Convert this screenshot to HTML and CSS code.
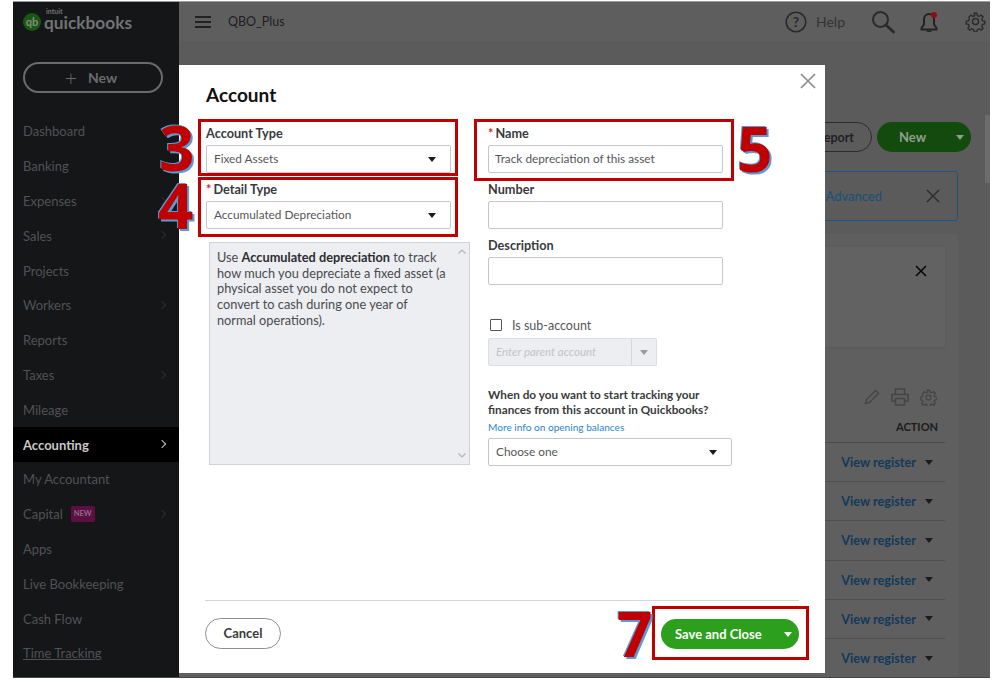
FILE: index.html
```html
<!DOCTYPE html>
<html lang="en">
<head>
<meta charset="utf-8">
<title>QuickBooks Account</title>
<link rel="stylesheet" href="styles.css">
</head>
<body>
<div class="frame">
  <aside class="sidebar">
    <div class="logo">
      <span class="logo-mark">qb</span>
      <div class="logo-text"><span class="logo-intuit">intuit</span><span class="logo-name">quickbooks</span></div>
    </div>
    <div class="new-btn"><span class="new-plus">+</span><span>New</span></div>
    <nav class="nav">
      <a class="nav-item">Dashboard</a>
      <a class="nav-item">Banking</a>
      <a class="nav-item">Expenses<i class="chev"></i></a>
      <a class="nav-item">Sales<i class="chev"></i></a>
      <a class="nav-item">Projects</a>
      <a class="nav-item">Workers<i class="chev"></i></a>
      <a class="nav-item">Reports</a>
      <a class="nav-item">Taxes<i class="chev"></i></a>
      <a class="nav-item">Mileage</a>
      <a class="nav-item active">Accounting<i class="chev"></i></a>
      <a class="nav-item">My Accountant</a>
      <a class="nav-item">Capital<span class="badge">NEW</span><i class="chev"></i></a>
      <a class="nav-item">Apps</a>
      <a class="nav-item">Live Bookkeeping</a>
      <a class="nav-item">Cash Flow</a>
      <a class="nav-item under">Time Tracking</a>
    </nav>
  </aside>
  <main class="main">
    <header class="topbar">
      <svg class="burger" width="16" height="12" viewBox="0 0 16 12"><path d="M0 1h16M0 6h16M0 11h16" stroke="#222" stroke-width="2"/></svg>
      <span class="company">QBO_Plus</span>
      <span class="spacer"></span>
      <svg class="top-icon" width="22" height="22" viewBox="0 0 22 22"><circle cx="11" cy="11" r="9.8" fill="none" stroke="#2a2a2a" stroke-width="1.6"/><text x="11" y="15.5" text-anchor="middle" class="q-mark">?</text></svg>
      <span class="help">Help</span>
      <svg class="search" width="24" height="24" viewBox="0 0 24 24"><circle cx="9.5" cy="9.5" r="7.5" fill="none" stroke="#2a2a2a" stroke-width="2"/><path d="M15 15l7.500 7" stroke="#2a2a2a" stroke-width="2.800" stroke-linecap="round"/></svg>
      <svg class="bell" width="22" height="24" viewBox="0 0 22 24"><path d="M11 4c-3 0-5 2.500-5 5.500v5L3.500 18v1.500h15V18L16 14.500v-5C16 6.500 14 4 11 4z" fill="none" stroke="#222" stroke-width="2"/><path d="M8 20.500c.5 2 5.500 2 6 0z" fill="#222"/><circle cx="16" cy="5" r="3" fill="#8f0f0f"/></svg>
      <svg class="gear" width="21" height="21" viewBox="0 0 24 24" fill="none" stroke="#2a2a2a" stroke-width="1.700"><circle cx="12" cy="12" r="3.500"/><path d="M10.300 1.500h3.400l.6 3 2.300 1 2.600-1.700 2.400 2.400-1.700 2.600 1 2.300 3 .6v3.400l-3 .6-1 2.300 1.700 2.600-2.400 2.400-2.600-1.700-2.300 1-.6 3h-3.400l-.6-3-2.300-1-2.600 1.700-2.400-2.400 1.700-2.600-1-2.300-3-.6v-3.400l3-.6 1-2.300L3.800 6.200l2.400-2.400 2.600 1.700 2.300-1z" transform="translate(1.200 1.200) scale(.9)"/></svg>
    </header>
    <section class="upper">
      <div class="actions">
        <span class="report-btn">Run report</span>
        <span class="green-btn">New<i class="caret caret-light"></i></span>
      </div>
      <div class="notice"><span class="notice-link">Advanced</span><svg width="14" height="14" viewBox="0 0 14 14"><path d="M1 1l12 12M13 1L1 13" stroke="#2a2a2a" stroke-width="1.400"/></svg></div>
      <span class="scroll-thumb"></span>
    </section>
    <section class="lower">
      <div class="lower-main">
        <div class="card"><svg width="12" height="12" viewBox="0 0 12 12"><path d="M1 1l10 10M11 1L1 11" stroke="#050505" stroke-width="1.500"/></svg></div>
        <div class="tools">
          <svg width="16" height="16" viewBox="0 0 16 16"><path d="M1.500 14.500l1-4L11.500 1.500l3 3-9 9z" fill="none" stroke="#444" stroke-width="1.300"/></svg>
          <svg width="18" height="18" viewBox="0 0 18 18" fill="none" stroke="#444" stroke-width="1.500"><path d="M4.500 6V1h9v5M4.500 13H1V6.500h16V13h-3.500M4.500 10.500h9V17h-9z"/></svg>
          <svg width="17" height="17" viewBox="0 0 24 24" fill="none" stroke="#444" stroke-width="1.800"><circle cx="12" cy="12" r="3.500"/><path d="M10.300 1.500h3.400l.6 3 2.300 1 2.600-1.700 2.400 2.400-1.700 2.600 1 2.300 3 .6v3.400l-3 .6-1 2.300 1.700 2.600-2.400 2.400-2.600-1.700-2.300 1-.6 3h-3.400l-.6-3-2.300-1-2.600 1.700-2.400-2.400 1.700-2.600-1-2.300-3-.6v-3.400l3-.6 1-2.300L3.800 6.200l2.400-2.400 2.600 1.700 2.300-1z"/></svg>
        </div>
        <div class="action-head">ACTION</div>
        <div class="reg-row"><span>View register</span><i class="caret"></i></div>
        <div class="reg-row"><span>View register</span><i class="caret"></i></div>
        <div class="reg-row"><span>View register</span><i class="caret"></i></div>
        <div class="reg-row"><span>View register</span><i class="caret"></i></div>
        <div class="reg-row"><span>View register</span><i class="caret"></i></div>
        <div class="reg-row"><span>View register</span><i class="caret"></i></div>
      </div>
      <div class="rail"></div>
    </section>
  </main>

  <div class="modal">
    <svg class="modal-close" width="16" height="16" viewBox="0 0 16 16"><path d="M1 1l14 14M15 1L1 15" stroke="#8c8c8c" stroke-width="1.700"/></svg>
    <h1 class="modal-title">Account</h1>
    <div class="modal-body">
      <div class="col-left">
        <label class="field-label">Account Type</label>
        <div class="control select"><span>Fixed Assets</span><i class="caret"></i></div>
        <label class="field-label second"><b class="req">*</b>Detail Type</label>
        <div class="control select"><span>Accumulated Depreciation</span><i class="caret"></i></div>
        <div class="desc-box">
          <p>Use <strong>Accumulated depreciation</strong> to track how much you depreciate a fixed asset (a physical asset you do not expect to convert to cash during one year of normal operations).</p>
          <div class="desc-scroll">
            <svg width="8" height="5" viewBox="0 0 8 5"><path d="M.500 4.500L4 1l3.500 3.500" fill="none" stroke="#b5b5b5" stroke-width="1.200"/></svg>
            <svg width="8" height="5" viewBox="0 0 8 5"><path d="M.500.500L4 4 7.500.500" fill="none" stroke="#b5b5b5" stroke-width="1.200"/></svg>
          </div>
        </div>
      </div>
      <div class="col-right">
        <label class="field-label"><b class="req">*</b>Name</label>
        <div class="control input"><span>Track depreciation of this asset</span></div>
        <label class="field-label second">Number</label>
        <div class="control input"></div>
        <label class="field-label second">Description</label>
        <div class="control input"></div>
        <div class="sub-row"><i class="checkbox"></i><span>Is sub-account</span></div>
        <div class="parent"><span class="parent-text">Enter parent account</span><span class="parent-arrow"><i class="caret caret-dim"></i></span></div>
        <p class="question">When do you want to start tracking your finances from this account in Quickbooks?</p>
        <a class="info-link">More info on opening balances</a>
        <div class="control select wide"><span>Choose one</span><i class="caret"></i></div>
      </div>
    </div>
    <footer class="modal-foot">
      <span class="cancel">Cancel</span>
      <span class="save"><span>Save and Close</span><i class="caret caret-white"></i></span>
    </footer>
  </div>

  <div class="mark box-3"></div>
  <div class="mark box-4"></div>
  <div class="mark box-5"></div>
  <div class="mark box-7"></div>
  <span class="digit d-3">3</span>
  <span class="digit d-4">4</span>
  <span class="digit d-5">5</span>
  <span class="digit d-7">7</span>
</div>
</body>
</html>
```
FILE: styles.css
```css
* { box-sizing: border-box; }
html, body { margin: 0; padding: 0; background: #fff; }
body { font-family: "Lato", "Liberation Sans", sans-serif; width: 998px; height: 689px; overflow: hidden; }

.frame {
  position: relative;
  display: flex;
  margin: 1px 0 0 13px;
  width: 977px;
  height: 677px;
  border-top: 1px solid #9a9a9a;
  border-bottom: 1px solid #444;
  overflow: hidden;
}

/* Sidebar */
.sidebar { width: 166px; flex: none; background: #151618; color: #505254; font-size: 13px; }
.logo { display: flex; align-items: center; height: 30px; margin: 5px 0 0 10px; gap: 3px; }
.logo-mark {
  width: 18px; height: 18px; border-radius: 50%; background: #1c5614; color: #7d917a;
  font-size: 11px; font-weight: 700; text-align: center; line-height: 17px;
}
.logo-text { display: flex; flex-direction: column; color: #727375; margin-top: -5px; }
.logo-intuit { font-size: 7px; line-height: 6px; font-weight: 700; padding-left: 2px; }
.logo-name { font-size: 17.300px; line-height: 17px; font-weight: 700; }
.new-btn {
  display: flex; align-items: center; justify-content: center; gap: 11px;
  width: 140px; height: 31px; margin: 25px 0 0 10px; padding-right: 4px;
  border: 2px solid #6a6b6d; border-radius: 16px; color: #6a6b6d; font-size: 14px; font-weight: 700;
}
.new-plus { font-size: 21px; font-weight: 300; line-height: 20px; }
.nav { margin-top: 21px; display: flex; flex-direction: column; }
.nav-item { display: flex; align-items: center; position: relative; height: 34.800px; flex: none; padding-left: 10px; font-size: 13px; }
.nav-item.active { background: #000; color: #c9c9c9; font-weight: 700; }
.nav-item.under { text-decoration: underline; }
.chev {
  position: absolute; right: 14px; top: 14px; width: 6px; height: 6px;
  border-top: 1.500px solid #2d2e30; border-right: 1.500px solid #2d2e30; transform: rotate(45deg);
}
.active .chev { border-color: #c9c9c9; }
.badge {
  margin-left: 8px; background: #5c0f42; color: #8e6a82; font-size: 7.500px; font-weight: 700;
  padding: 3px 3px; border-radius: 2px; line-height: 10px;
}

/* Dimmed page behind modal */
.main { flex: 1; min-width: 0; background: #5b5b5b; display: flex; flex-direction: column; }
.topbar { display: flex; align-items: center; height: 39px; padding: 0 4px 0 16px; flex: none; background: #5e5e5e; }
.burger { flex: none; }
.company { margin-left: 17px; font-size: 12.500px; color: #1e1e1e; }
.spacer { flex: 1; }
.q-mark { font: 700 14px "Lato", sans-serif; fill: #2a2a2a; }
.help { margin-left: 9px; font-size: 14px; color: #333; }
.search { margin-left: 26px; }
.bell { margin-left: 23px; }
.gear { margin-left: 25px; }
.upper { position: relative; height: 193px; flex: none; }
.actions { display: flex; justify-content: flex-end; gap: 5px; padding: 81px 19px 0 0; }
.report-btn {
  width: 82px; height: 30px; border: 1px solid #2c2c2c; border-radius: 15px; font-size: 12.500px;
  font-weight: 700; color: #222; line-height: 29px; text-align: right; padding-right: 17px;
}
.green-btn {
  position: relative; width: 94px; height: 30px; border-radius: 15px; background: #134a0d; color: #8fa08c;
  font-size: 13px; font-weight: 700; line-height: 31px; padding-left: 22px;
}
.green-btn .caret { position: absolute; right: 7px; top: 13px; }
.notice {
  display: flex; align-items: center; justify-content: flex-end; gap: 44px;
  margin: 19px 32px 0 auto; width: 200px; height: 50px; border: 1px solid #1c5580; border-radius: 3px;
  padding: 0 17px 1px 0; font-size: 13px;
}
.notice-link { color: #16517c; }
.scroll-thumb { position: absolute; right: 0; top: 74px; width: 5px; height: 68px; background: #6c6c6c; }
.lower { flex: 1; display: flex; min-height: 0; }
.lower-main { flex: 1; min-width: 0; display: flex; flex-direction: column; padding: 13px 13px 0 0; background: #5f5f5f; }
.rail { width: 32px; flex: none; }
.card {
  align-self: flex-end; width: 260px; height: 100px; background: #626262; padding: 14px 0 0 230px; flex: none;
  box-shadow: 0 1px 3px #575757;
}
.tools { display: flex; justify-content: flex-end; align-items: center; gap: 11px; margin-top: 41px; height: 18px; padding-right: 8px; flex: none; }
.action-head {
  text-align: right; font-size: 11px; font-weight: 700; color: #1b1b1b; padding: 13px 7px 8px 0;
  border-bottom: 1px solid #4a4a4a; line-height: 15px; flex: none;
}
.reg-row {
  flex: none; display: flex; align-items: center; justify-content: flex-end; gap: 9px; height: 39.200px;
  padding-right: 12px; font-size: 12.700px; font-weight: 700; color: #12395a; border-bottom: 1px solid #4f4f4f;
}

/* Carets */
.caret { display: block; width: 0; height: 0; border-left: 4.500px solid transparent; border-right: 4.500px solid transparent; border-top: 5px solid #1b1b1b; }
.caret-light { border-top-color: #8fa08c; }
.caret-white { border-top-color: #fff; }
.caret-dim { border-top-color: #9a9a9a; }

/* Modal */
.modal {
  position: absolute; left: 166px; top: 63px; width: 646px; height: 608px; background: #fff;
  display: flex; flex-direction: column; padding: 0 26px 0 27px; color: #393a3d;
}
.modal-close { position: absolute; left: 621px; top: 8px; }
.modal-title { margin: 18px 0 0; font-size: 19px; line-height: 24px; font-weight: 700; color: #111; }
.modal-body { display: flex; margin-top: 17px; flex: 1; min-height: 0; }
.col-left { width: 282px; flex: none; }
.col-right { flex: 1; }
.field-label { display: block; font-size: 12.700px; line-height: 18px; height: 18px; margin-bottom: 3px; font-weight: 700; color: #393a3d; }
.field-label.second { margin-top: 7px; }
.req { color: #d52b1e; font-weight: 700; margin-right: 2px; }
.control {
  display: flex; align-items: center; justify-content: space-between; height: 28px; background: #fff;
  border: 1px solid #c4c6cb; border-radius: 2px; padding: 0 7px 0 6px; font-size: 11.800px; color: #55565a;
}
.control span { position: relative; top: -0.500px; }
.col-left .control { width: 245px; padding: 0 14px 0 7px; }
.col-right .control { width: 235px; }
.col-right .control.wide { width: 244px; padding: 0 14px 0 7px; }
.desc-box {
  position: relative; margin: 13px 0 0 3px; width: 261px; height: 223px; background: #eceef1;
  border: 1px solid #d0d2d6; padding: 7px 0 0 7px; font-size: 12.750px; line-height: 15.700px; color: #4a4b4e;
}
.desc-box p { margin: 0; width: 231px; }
.desc-box strong { color: #2c2d30; }
.desc-scroll {
  position: absolute; right: 0; top: 0; bottom: 0; width: 15px; display: flex; flex-direction: column;
  justify-content: space-between; align-items: center; padding: 6px 0;
}
.sub-row { display: flex; align-items: center; margin: 31px 0 0 2px; gap: 10px; font-size: 12.500px; color: #55565a; height: 18px; }
.checkbox { width: 12px; height: 12px; border: 1.500px solid #555; border-radius: 1px; background: #fff; }
.parent {
  display: flex; width: 169px; height: 28px; margin-top: 4px; background: #eceef1;
  border: 1px solid #dcdee2; border-radius: 2px; font-size: 11.500px; font-style: italic; color: #c2c4c8;
}
.parent-text { width: 143px; padding-left: 7px; line-height: 26px; border-right: 1px solid #d5d7db; }
.parent-arrow { flex: 1; display: flex; align-items: center; justify-content: center; }
.question { margin: 21px 0 0; width: 240px; font-size: 11.750px; line-height: 15px; font-weight: 700; color: #393a3d; }
.info-link { display: block; margin-top: 3px; font-size: 10.100px; line-height: 15px; color: #2b87c9; }
.col-right .wide { margin-top: 3px; }
.modal-foot {
  display: flex; align-items: center; justify-content: space-between; height: 73px; margin-right: 0;
  border-top: 1px solid #d4d4d4; padding-bottom: 7px; width: 594px; margin-left: -1px; flex: none;
}
.cancel {
  width: 76px; height: 31px; border: 1px solid #8d9096; border-radius: 16px; font-size: 13px; font-weight: 700;
  line-height: 29px; text-align: center; color: #393a3d;
}
.save {
  position: relative; width: 138px; height: 30px; border-radius: 15px; background: #2ca01c; color: #fff;
  font-size: 13px; font-weight: 700; line-height: 30px; padding-left: 14px;
}
.save .caret { position: absolute; right: 7px; top: 13px; }

/* Tutorial annotations */
.mark { position: absolute; border: 3px solid #c00000; }
.box-3 { left: 185px; top: 117px; width: 260px; height: 57px; }
.box-4 { left: 185px; top: 175px; width: 260px; height: 60px; }
.box-5 { left: 461px; top: 117px; width: 260px; height: 62px; }
.box-7 { left: 639px; top: 604px; width: 157px; height: 54px; }
.digit {
  position: absolute; font-family: "Open Sans", sans-serif; font-weight: 700; font-size: 62px; line-height: 62px;
  color: #c00000; text-shadow: -1px -1px 0 #5b9bd5, 2px 2px 0 #5b9bd5;
}
.d-3 { left: 146px; top: 114px; }
.d-4 { left: 145px; top: 172px; }
.d-5 { left: 724px; top: 115px; }
.d-7 { left: 604px; top: 600px; }
```
